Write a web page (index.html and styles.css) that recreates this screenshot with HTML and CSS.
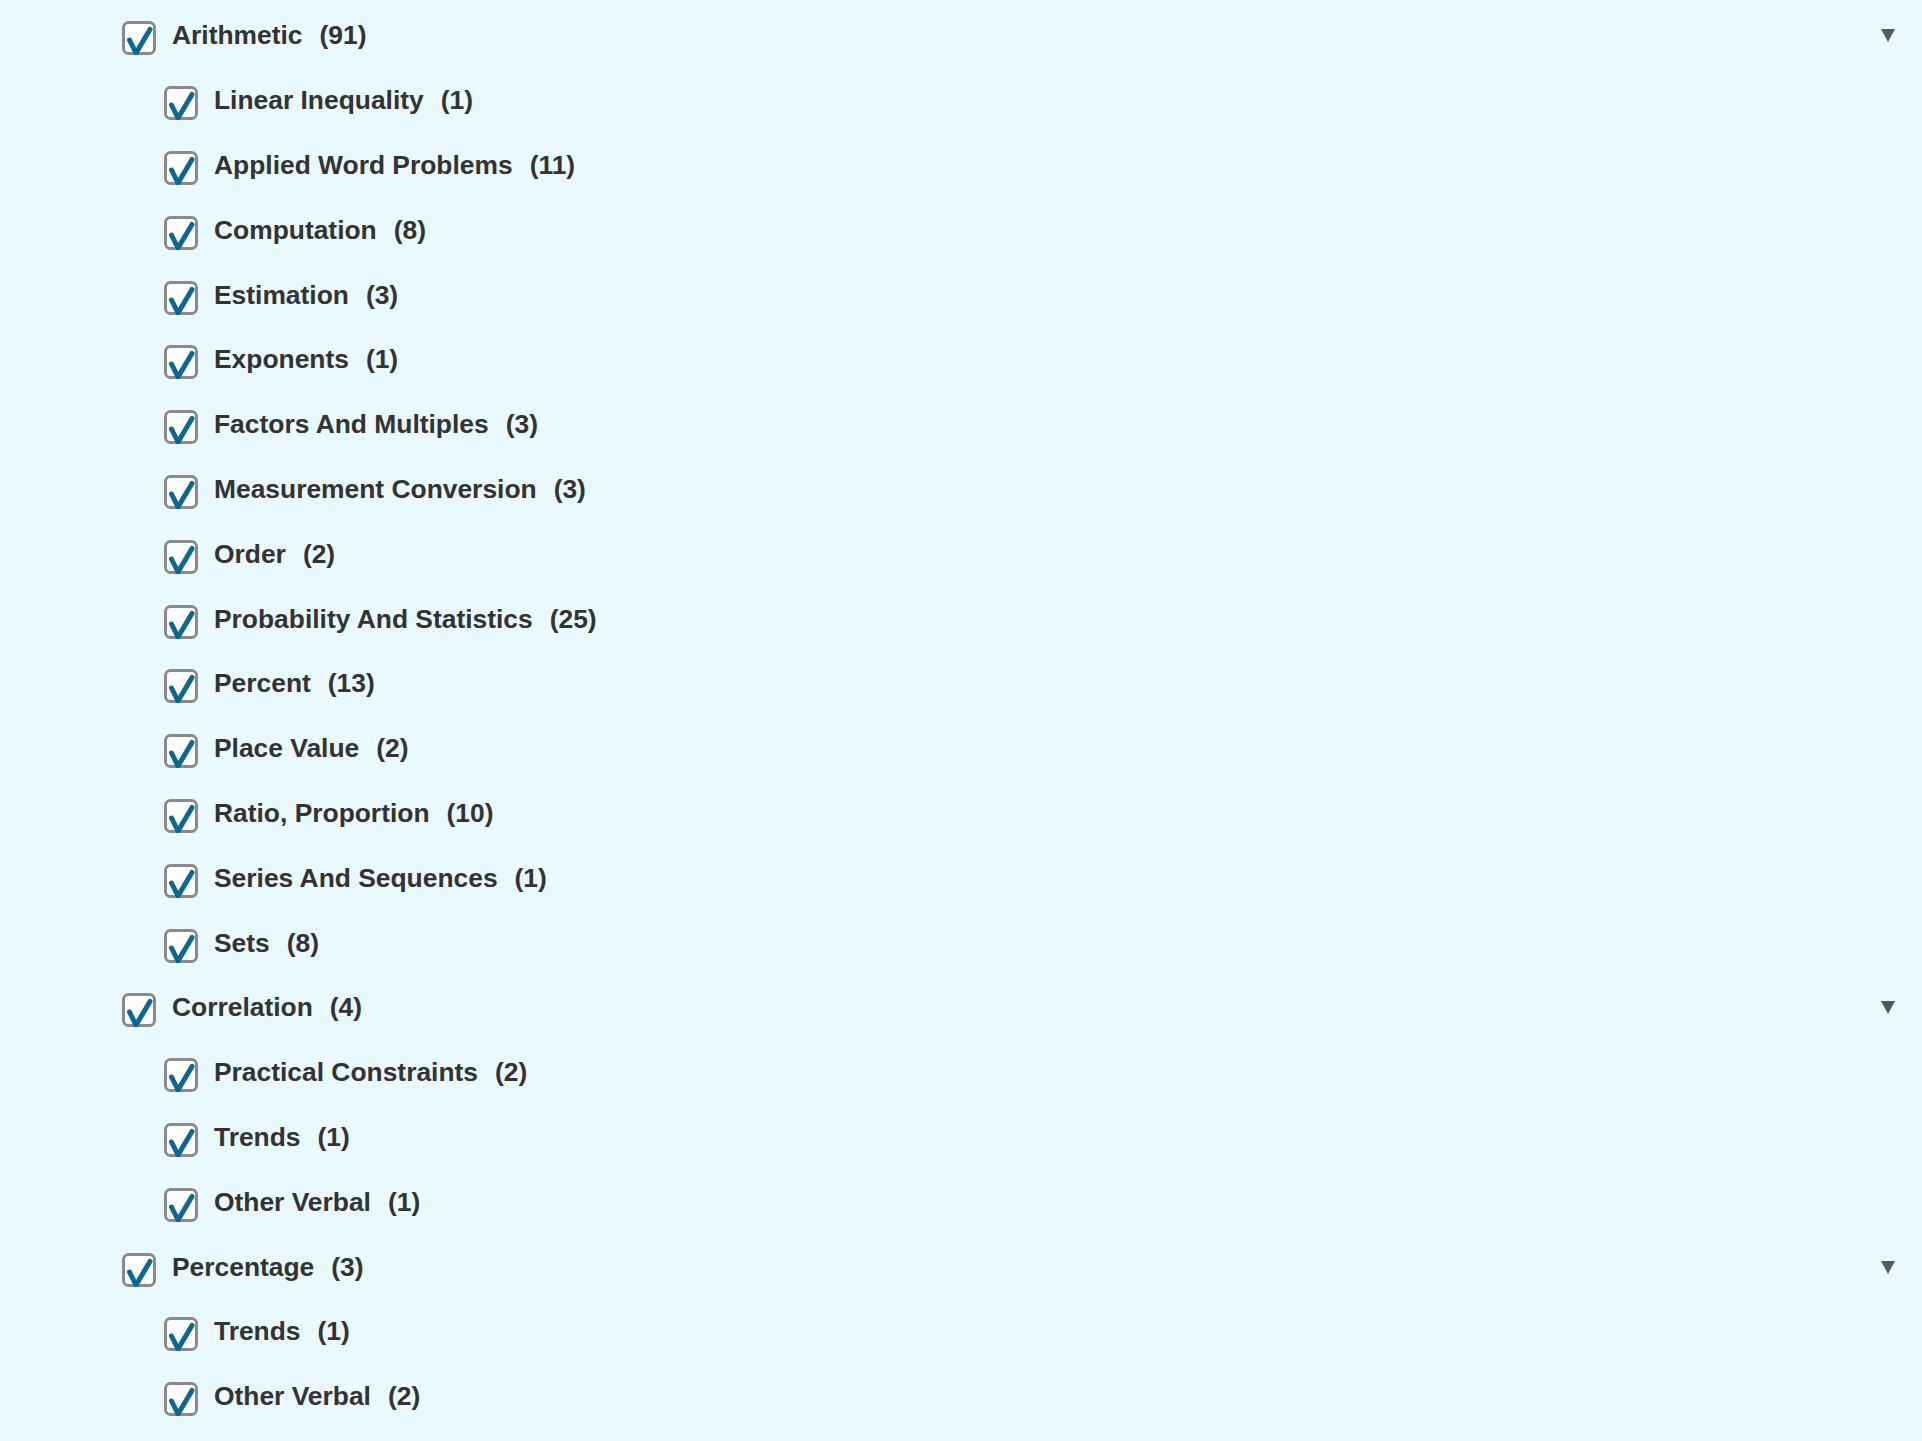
FILE: index.html
```html
<!DOCTYPE html>
<html lang="en">
<head>
    <meta charset="UTF-8">
    <meta name="viewport" content="width=device-width, initial-scale=1.0">
    <title>Topics</title>
    <link rel="stylesheet" href="styles.css">
</head>
<body>

    <!-- Shared tick icon -->
    <svg class="defs" aria-hidden="true">
        <symbol id="tick" viewBox="0 0 34 34">
            <rect x="1.5" y="1.5" width="31" height="31" rx="5" fill="#fff" stroke="#8b8b8b" stroke-width="3"/>
            <path d="M7.5 19 L14 32 L28 8.5" fill="none" stroke="#0b6892" stroke-width="5" stroke-linecap="round" stroke-linejoin="round"/>
        </symbol>
    </svg>

    <ul class="topics">
        <!-- Arithmetic -->
        <li class="topic">
            <div class="row">
                <svg class="check"><use href="#tick"/></svg>
                <span class="row__label">Arithmetic</span><span class="row__count">(91)</span>
                <span class="row__toggle"></span>
            </div>
            <ul class="subtopics">
                <li class="row"><svg class="check"><use href="#tick"/></svg><span class="row__label">Linear Inequality</span><span class="row__count">(1)</span></li>
                <li class="row"><svg class="check"><use href="#tick"/></svg><span class="row__label">Applied Word Problems</span><span class="row__count">(11)</span></li>
                <li class="row"><svg class="check"><use href="#tick"/></svg><span class="row__label">Computation</span><span class="row__count">(8)</span></li>
                <li class="row"><svg class="check"><use href="#tick"/></svg><span class="row__label">Estimation</span><span class="row__count">(3)</span></li>
                <li class="row"><svg class="check"><use href="#tick"/></svg><span class="row__label">Exponents</span><span class="row__count">(1)</span></li>
                <li class="row"><svg class="check"><use href="#tick"/></svg><span class="row__label">Factors And Multiples</span><span class="row__count">(3)</span></li>
                <li class="row"><svg class="check"><use href="#tick"/></svg><span class="row__label">Measurement Conversion</span><span class="row__count">(3)</span></li>
                <li class="row"><svg class="check"><use href="#tick"/></svg><span class="row__label">Order</span><span class="row__count">(2)</span></li>
                <li class="row"><svg class="check"><use href="#tick"/></svg><span class="row__label">Probability And Statistics</span><span class="row__count">(25)</span></li>
                <li class="row"><svg class="check"><use href="#tick"/></svg><span class="row__label">Percent</span><span class="row__count">(13)</span></li>
                <li class="row"><svg class="check"><use href="#tick"/></svg><span class="row__label">Place Value</span><span class="row__count">(2)</span></li>
                <li class="row"><svg class="check"><use href="#tick"/></svg><span class="row__label">Ratio, Proportion</span><span class="row__count">(10)</span></li>
                <li class="row"><svg class="check"><use href="#tick"/></svg><span class="row__label">Series And Sequences</span><span class="row__count">(1)</span></li>
                <li class="row"><svg class="check"><use href="#tick"/></svg><span class="row__label">Sets</span><span class="row__count">(8)</span></li>
            </ul>
        </li>

        <!-- Correlation -->
        <li class="topic">
            <div class="row">
                <svg class="check"><use href="#tick"/></svg>
                <span class="row__label">Correlation</span><span class="row__count">(4)</span>
                <span class="row__toggle"></span>
            </div>
            <ul class="subtopics">
                <li class="row"><svg class="check"><use href="#tick"/></svg><span class="row__label">Practical Constraints</span><span class="row__count">(2)</span></li>
                <li class="row"><svg class="check"><use href="#tick"/></svg><span class="row__label">Trends</span><span class="row__count">(1)</span></li>
                <li class="row"><svg class="check"><use href="#tick"/></svg><span class="row__label">Other Verbal</span><span class="row__count">(1)</span></li>
            </ul>
        </li>

        <!-- Percentage -->
        <li class="topic">
            <div class="row">
                <svg class="check"><use href="#tick"/></svg>
                <span class="row__label">Percentage</span><span class="row__count">(3)</span>
                <span class="row__toggle"></span>
            </div>
            <ul class="subtopics">
                <li class="row"><svg class="check"><use href="#tick"/></svg><span class="row__label">Trends</span><span class="row__count">(1)</span></li>
                <li class="row"><svg class="check"><use href="#tick"/></svg><span class="row__label">Other Verbal</span><span class="row__count">(2)</span></li>
            </ul>
        </li>
    </ul>

</body>
</html>
```

FILE: styles.css
```css
body {
    background-color: #eaf8ff;
    color: #333;
    font-family: 'Liberation Sans', Arial, sans-serif;
    margin: 0;
    padding: 0;
}

.defs {
    display: none;
}

/* Topic tree */
.topics {
    list-style: none;
    margin: 0;
    padding: 3.5px 27px 0 122px;
}

.subtopics {
    list-style: none;
    margin: 0;
    padding: 0 0 0 42px;
}

.row {
    display: flex;
    align-items: center;
    height: 64.8px;
    font-size: 26.4px;
    font-weight: 700;
}

.check {
    width: 34px;
    height: 34px;
    flex-shrink: 0;
    margin-top: 5px;
    margin-right: 16px;
    overflow: visible;
}

.row__count {
    margin-left: 17px;
}

/* Collapse arrow */
.row__toggle {
    margin-left: auto;
    width: 0;
    height: 0;
    border-left: 7.5px solid transparent;
    border-right: 7.5px solid transparent;
    border-top: 13px solid #595959;
}
```
